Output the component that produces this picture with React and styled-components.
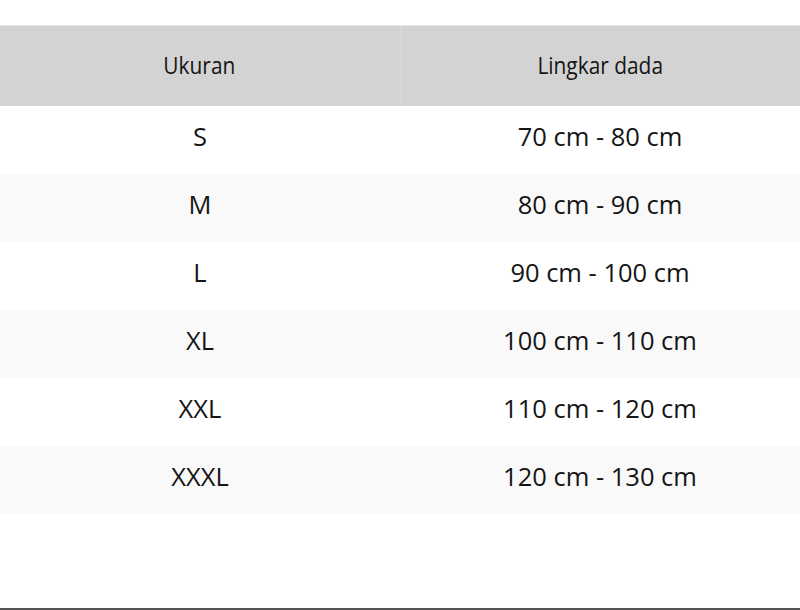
import styled, { createGlobalStyle } from 'styled-components'

const sizes = [
  { size: 'S', chest: '70 cm - 80 cm' },
  { size: 'M', chest: '80 cm - 90 cm' },
  { size: 'L', chest: '90 cm - 100 cm' },
  { size: 'XL', chest: '100 cm - 110 cm' },
  { size: 'XXL', chest: '110 cm - 120 cm' },
  { size: 'XXXL', chest: '120 cm - 130 cm' },
]

const App = () => {
  return (
    <>
      <GlobalStyle />
      <Page>
        <SizeTable>
          <thead>
            <tr>
              <HeadCell>
                <HeadLabel>Ukuran</HeadLabel>
              </HeadCell>
              <HeadCell>
                <HeadLabel>Lingkar dada</HeadLabel>
              </HeadCell>
            </tr>
          </thead>
          <tbody>
            {sizes.map((row, i) => (
              <Row key={row.size} $striped={i % 2 === 1}>
                <Cell>{row.size}</Cell>
                <Cell>{row.chest}</Cell>
              </Row>
            ))}
          </tbody>
        </SizeTable>
      </Page>
    </>
  )
}

export default App

const GlobalStyle = createGlobalStyle`
  html, body {
    margin: 0;
    padding: 0;
    background: #fff;
  }
  body {
    font-family: 'Open Sans', 'Noto Sans', sans-serif;
    color: #111;
  }
`

const Page = styled.div`
  box-sizing: border-box;
  height: 610px;
  padding-top: 25px;
  border-bottom: 2px solid #555;
`

const SizeTable = styled.table`
  width: 100%;
  border-collapse: collapse;
  table-layout: fixed;
`

const HeadCell = styled.th`
  height: 76px;
  padding: 0 0 4px;
  background: #d3d3d3;
  border-top: 1px solid #e4e4e4;
  font-weight: 400;
  text-align: center;
  vertical-align: middle;
  & + & {
    border-left: 1px solid #d9d9d9;
  }
`

const HeadLabel = styled.span`
  display: inline-block;
  font-size: 24px;
  color: #151515;
  transform: scaleX(0.87);
`

const Row = styled.tr`
  height: 68px;
  background: ${(p) => (p.$striped ? '#f9f9f9' : '#fff')};
`

const Cell = styled.td`
  padding: 0 0 8px;
  text-align: center;
  vertical-align: middle;
  font-size: 25.5px;
  color: #151515;
`
